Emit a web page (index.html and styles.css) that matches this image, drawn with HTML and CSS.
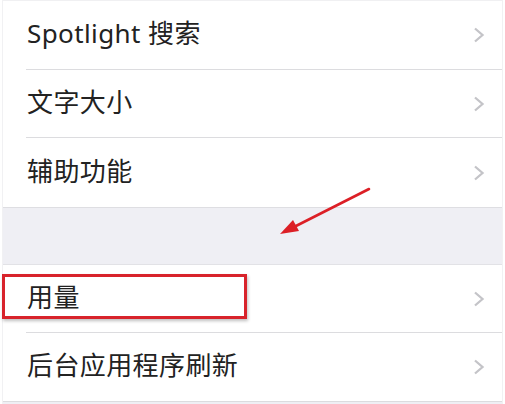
FILE: index.html
```html
<!DOCTYPE html>
<html lang="zh">
<head>
<meta charset="utf-8">
<link rel="stylesheet" href="styles.css">
</head>
<body>
<div class="page">
  <div class="group">
    <div class="row r1"><span class="label">Spotlight 搜索</span><svg class="chev" viewBox="0 0 12 16"><path d="M2 1.5 L9.5 8 L2 14.5"/></svg></div>
    <div class="row r2"><span class="label">文字大小</span><svg class="chev" viewBox="0 0 12 16"><path d="M2 1.5 L9.5 8 L2 14.5"/></svg></div>
    <div class="row r3 last"><span class="label">辅助功能</span><svg class="chev" viewBox="0 0 12 16"><path d="M2 1.5 L9.5 8 L2 14.5"/></svg></div>
  </div>
  <div class="band"></div>
  <div class="group">
    <div class="row r4"><span class="label">用量</span><svg class="chev" viewBox="0 0 12 16"><path d="M2 1.5 L9.5 8 L2 14.5"/></svg></div>
    <div class="row r5 last"><span class="label">后台应用程序刷新</span><svg class="chev" viewBox="0 0 12 16"><path d="M2 1.5 L9.5 8 L2 14.5"/></svg></div>
  </div>
  <div class="foot"></div>
</div>
<div class="highlight"></div>
<svg class="arrow" width="505" height="404" viewBox="0 0 505 404">
  <line x1="369" y1="189" x2="292" y2="228" stroke="#dc1f26" stroke-width="2.6" stroke-linecap="round"/>
  <polygon points="280,234 293,220 299,231" fill="#dc1f26"/>
</svg>
</body>
</html>
```
FILE: styles.css
```css
html, body {
  margin: 0;
  padding: 0;
  background: #ffffff;
  width: 505px;
  height: 404px;
  overflow: hidden;
}
body {
  font-family: "Noto Sans", "Noto Sans CJK SC", sans-serif;
  position: relative;
}
.page {
  margin: 0 2px;
  border-left: 1px solid #f1f1f3;
  border-right: 1px solid #f1f1f3;
  border-top: 1px solid #f0f0f2;
  display: flex;
  flex-direction: column;
}
.group {
  display: flex;
  flex-direction: column;
  padding-left: 23px;
}
.row {
  display: flex;
  align-items: center;
  justify-content: space-between;
  border-bottom: 1px solid #dcdcdf;
  padding-right: 17px;
  box-sizing: border-box;
}
.row.last {
  border-bottom: none;
}
.r1 { height: 69px; }
.r2 { height: 68px; }
.r3 { height: 69px; }
.r4 { height: 68px; }
.r5 { height: 68px; }
.label {
  font-size: 26px;
  line-height: 30px;
  color: #222222;
  padding-left: 1px;
  padding-bottom: 4px;
  letter-spacing: 0.4px;
}
.chev {
  width: 12px;
  height: 16px;
  fill: none;
  stroke: #c4c4c8;
  stroke-width: 2.3;
}
.band {
  height: 56px;
  background: #efeff4;
  border-top: 1px solid #dedee2;
  border-bottom: 1px solid #e2e2e6;
}
.foot {
  height: 4px;
  background: #efeff4;
  border-top: 1px solid #dcdcdf;
}
.highlight {
  position: absolute;
  left: 2px;
  top: 274px;
  width: 239px;
  height: 39px;
  border: 3px solid #d8232b;
  box-shadow: 1px 2px 3px rgba(0,0,0,0.25);
}
.arrow {
  position: absolute;
  left: 0;
  top: 0;
  pointer-events: none;
}
```
